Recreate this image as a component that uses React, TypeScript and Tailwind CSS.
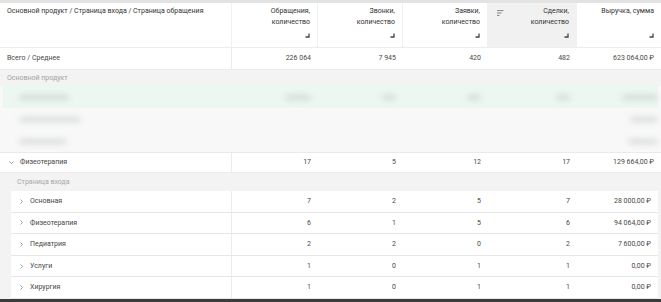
import type { ReactNode } from 'react';

const GRID = 'grid grid-cols-[232px_86px_85px_85px_89px_84px]';

type Row = { name: string; values: string[] };

const ENTRY_ROWS: Row[] = [
  { name: 'Основная', values: ['7', '2', '5', '7', '28 000,00 ₽'] },
  { name: 'Физеотерапия', values: ['6', '1', '5', '6', '94 064,00 ₽'] },
  { name: 'Педиатрия', values: ['2', '2', '0', '2', '7 600,00 ₽'] },
  { name: 'Услуги', values: ['1', '0', '1', '1', '0,00 ₽'] },
  { name: 'Хирургия', values: ['1', '0', '1', '1', '0,00 ₽'] },
];

function ResizeCorner() {
  return (
    <svg width="5" height="5" viewBox="0 0 5 5" className="block">
      <path d="M4 0.5V4H0.5" fill="none" stroke="#444" strokeWidth="1.3" />
    </svg>
  );
}

function SortIcon() {
  return (
    <svg width="7" height="6" viewBox="0 0 7 6" className="block">
      <path d="M0 0.6H6.5M0 3H4.5M0 5.4H2.5" stroke="#777" strokeWidth="0.9" />
    </svg>
  );
}

function Chevron({ down }: { down?: boolean }) {
  return (
    <svg width="5" height="5" viewBox="0 0 5 5" className="block">
      <path d={down ? 'M0.5 1.5L2.5 3.5L4.5 1.5' : 'M1.5 0.5L3.5 2.5L1.5 4.5'} fill="none" stroke="#888" strokeWidth="0.8" />
    </svg>
  );
}

function HeadCell({ lines, sorted, last }: { lines: string[]; sorted?: boolean; last?: boolean }) {
  return (
    <div
      className={`relative flex flex-col items-end justify-between pb-[9px] pr-[7px] pt-[3px] text-right ${
        sorted ? 'bg-[#f1f1f1]' : ''
      } ${last ? '' : 'border-r border-[#f0f0f0]'}`}
    >
      {sorted && (
        <div className="absolute left-[9px] top-[7px]">
          <SortIcon />
        </div>
      )}
      <div className="leading-[11px]">
        {lines.map((l) => (
          <div key={l} className="whitespace-nowrap">
            {l}
          </div>
        ))}
      </div>
      <ResizeCorner />
    </div>
  );
}

function NumCells({ values }: { values: string[] }) {
  return (
    <>
      {values.map((v, i) => (
        <div key={i} className="flex items-center justify-end pr-[7px]">
          {v}
        </div>
      ))}
    </>
  );
}

function Blurred({ w }: { w: string }) {
  return <div className={`h-[5px] rounded-full bg-[#9aa5a0] opacity-35 blur-[3px] ${w}`} />;
}

function BlurRow({ tint, children }: { tint?: boolean; children: ReactNode }) {
  return <div className={`${GRID} h-[22px] ${tint ? 'bg-[#edf7f2]' : 'bg-[#f8f8f8]'}`}>{children}</div>;
}

export default function App() {
  return (
    <div className="h-[302px] w-[661px] overflow-hidden bg-white text-[7px] text-[#474747] antialiased [font-family:Roboto,'Noto_Sans',sans-serif]">
      <div className="h-[3px] bg-[#e3e3e3]" />

      {/* шапка таблицы */}
      <div className={`${GRID} h-[45px] border-b border-[#ececec] text-[#333]`}>
        <div className="border-r border-[#f0f0f0] px-[7px] pt-[3px] leading-[11px]">
          Основной продукт / Страница входа / Страница обращения
        </div>
        <HeadCell lines={['Обращения,', 'количество']} />
        <HeadCell lines={['Звонки,', 'количество']} />
        <HeadCell lines={['Заявки,', 'количество']} />
        <HeadCell lines={['Сделки,', 'количество']} sorted />
        <HeadCell lines={['Выручка, сумма']} last />
      </div>

      <div className={`${GRID} h-[22px] border-b border-[#ececec]`}>
        <div className="flex items-center border-r border-[#ececec] px-[7px]">Всего / Среднее</div>
        <NumCells values={['226 064', '7 945', '420', '482', '623 064,00 ₽']} />
      </div>

      <div className="flex h-[16px] items-center bg-[#f3f3f3] px-[7px] text-[#a3a3a3]">Основной продукт</div>

      {/* скрытые строки */}
      <div className="border-b border-[#eaeaea] bg-[#f8f8f8] px-[3px]">
        <BlurRow tint>
          <div className="flex items-center pl-[16px]">
            <Blurred w="w-[50px]" />
          </div>
          <div className="flex items-center justify-end pr-[10px]">
            <Blurred w="w-[26px]" />
          </div>
          <div className="flex items-center justify-end pr-[10px]">
            <Blurred w="w-[14px]" />
          </div>
          <div className="flex items-center justify-end pr-[10px]">
            <Blurred w="w-[14px]" />
          </div>
          <div className="flex items-center justify-end pr-[10px]">
            <Blurred w="w-[14px]" />
          </div>
          <div className="flex items-center justify-end pr-[6px]">
            <Blurred w="w-[36px]" />
          </div>
        </BlurRow>
        <BlurRow>
          <div className="flex items-center pl-[16px]">
            <Blurred w="w-[62px]" />
          </div>
          <div />
          <div />
          <div />
          <div />
          <div className="flex items-center justify-end pr-[6px]">
            <Blurred w="w-[28px]" />
          </div>
        </BlurRow>
        <BlurRow>
          <div className="flex items-center pl-[16px]">
            <Blurred w="w-[48px]" />
          </div>
          <div />
          <div />
          <div />
          <div />
          <div className="flex items-center justify-end pr-[6px]">
            <Blurred w="w-[30px]" />
          </div>
        </BlurRow>
      </div>

      <div className={`${GRID} h-[20px] border-b border-[#ececec] bg-white`}>
        <div className="flex items-center gap-[6px] border-r border-[#ececec] pl-[9px]">
          <Chevron down />
          <span>Физеотерапия</span>
        </div>
        <NumCells values={['17', '5', '12', '17', '129 664,00 ₽']} />
      </div>

      <div className="bg-[#f3f3f3] pl-[11px] pr-[3px]">
        <div className="flex h-[18px] items-center pl-[6px] text-[#a8a8a8]">Страница входа</div>
        {ENTRY_ROWS.map((r) => (
          <div
            key={r.name}
            className="grid h-[21.6px] grid-cols-[221px_86px_85px_85px_89px_81px] border-b border-[#e6e6e6] bg-white"
          >
            <div className="flex items-center gap-[6px] border-r border-[#ececec] pl-[8px]">
              <Chevron />
              <span>{r.name}</span>
            </div>
            <NumCells values={r.values} />
          </div>
        ))}
      </div>

      <div className="h-[4px] bg-[#3b3b3b]" />
    </div>
  );
}
